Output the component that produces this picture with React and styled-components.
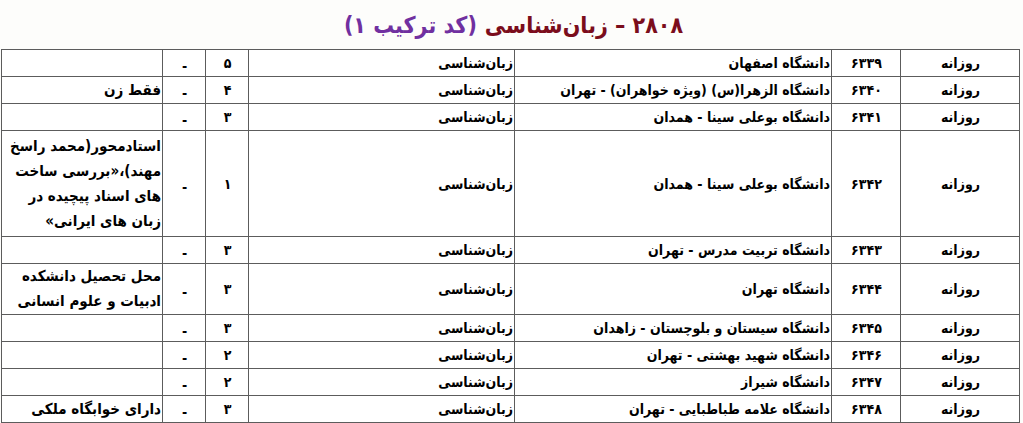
import React from "react";
import styled, { createGlobalStyle } from "styled-components";

const GlobalStyle = createGlobalStyle`
  html, body {
    margin: 0;
    padding: 0;
    background: #fdfdfb;
  }
  body {
    font-family: "DejaVu Sans Condensed", "DejaVu Sans", sans-serif;
    color: #000;
  }
`;

const Page = styled.div`
  width: 1023px;
  height: 423px;
  overflow: hidden;
  direction: rtl;
`;

const Title = styled.h1`
  margin: 0;
  height: 49px;
  display: flex;
  align-items: center;
  justify-content: center;
  gap: 8px;
  font-size: 23px;
  font-weight: 700;
  font-family: "DejaVu Sans Condensed", "DejaVu Sans", sans-serif;
  padding-left: 4px;
`;

const TitleMain = styled.span`
  color: #7b0d1c;
`;

const TitleSub = styled.span`
  color: #7030a0;
`;

const Table = styled.table`
  border-collapse: collapse;
  margin-right: 3px;
  width: 1018px;
  table-layout: fixed;
  background: #fff;
`;

const Row = styled.tr`
  height: ${(p) => p.$h}px;
`;

const Cell = styled.td`
  border: 1px solid #5c5c5c;
  padding: 0 1px 0 2px;
  font-size: 14px;
  font-weight: 700;
  text-align: ${(p) => p.$align || "right"};
  vertical-align: middle;
  white-space: nowrap;
  line-height: 18px;
`;

const NoteCell = styled(Cell)`
  white-space: normal;
  font-size: 15px;
  line-height: 25px;
`;

const Dash = styled.span`
  display: inline-block;
  transform: translateY(3px);
`;

const rows = [
  { h: 27, code: "۶۳۳۹", uni: "دانشگاه اصفهان", cap: "۵", note: [] },
  { h: 27, code: "۶۳۴۰", uni: "دانشگاه الزهرا(س) (ویژه خواهران) - تهران", cap: "۴", note: ["فقط زن"] },
  { h: 27, code: "۶۳۴۱", uni: "دانشگاه بوعلی سینا - همدان", cap: "۳", note: [] },
  {
    h: 106,
    code: "۶۳۴۲",
    uni: "دانشگاه بوعلی سینا - همدان",
    cap: "۱",
    note: ["استادمحور(محمد راسخ", "مهند)،«بررسی ساخت", "های اسناد پیچیده در", "زبان های ایرانی»"],
  },
  { h: 27, code: "۶۳۴۳", uni: "دانشگاه تربیت مدرس - تهران", cap: "۳", note: [] },
  { h: 51, code: "۶۳۴۴", uni: "دانشگاه تهران", cap: "۳", note: ["محل تحصیل دانشکده", "ادبیات و علوم انسانی"] },
  { h: 27, code: "۶۳۴۵", uni: "دانشگاه سیستان و بلوچستان - زاهدان", cap: "۳", note: [] },
  { h: 27, code: "۶۳۴۶", uni: "دانشگاه شهید بهشتی - تهران", cap: "۲", note: [] },
  { h: 27, code: "۶۳۴۷", uni: "دانشگاه شیراز", cap: "۲", note: [] },
  { h: 27, code: "۶۳۴۸", uni: "دانشگاه علامه طباطبایی - تهران", cap: "۳", note: ["دارای خوابگاه ملکی"] },
];

export default function App() {
  return (
    <Page>
      <GlobalStyle />
      <Title>
        <TitleMain>۲۸۰۸ – زبان‌شناسی</TitleMain>
        <TitleSub>(کد ترکیب ۱)</TitleSub>
      </Title>
      <Table>
        <colgroup>
          <col style={{ width: 119 }} />
          <col style={{ width: 69 }} />
          <col style={{ width: 317 }} />
          <col style={{ width: 266 }} />
          <col style={{ width: 43 }} />
          <col style={{ width: 43 }} />
          <col style={{ width: 161 }} />
        </colgroup>
        <tbody>
          {rows.map((r) => (
            <Row key={r.code} $h={r.h}>
              <Cell $align="center">روزانه</Cell>
              <Cell $align="center">{r.code}</Cell>
              <Cell>{r.uni}</Cell>
              <Cell>زبان‌شناسی</Cell>
              <Cell $align="center">{r.cap}</Cell>
              <Cell $align="center">
                <Dash>-</Dash>
              </Cell>
              <NoteCell>
                {r.note.map((line, i) => (
                  <React.Fragment key={i}>
                    {i > 0 && <br />}
                    {line}
                  </React.Fragment>
                ))}
              </NoteCell>
            </Row>
          ))}
        </tbody>
      </Table>
    </Page>
  );
}
